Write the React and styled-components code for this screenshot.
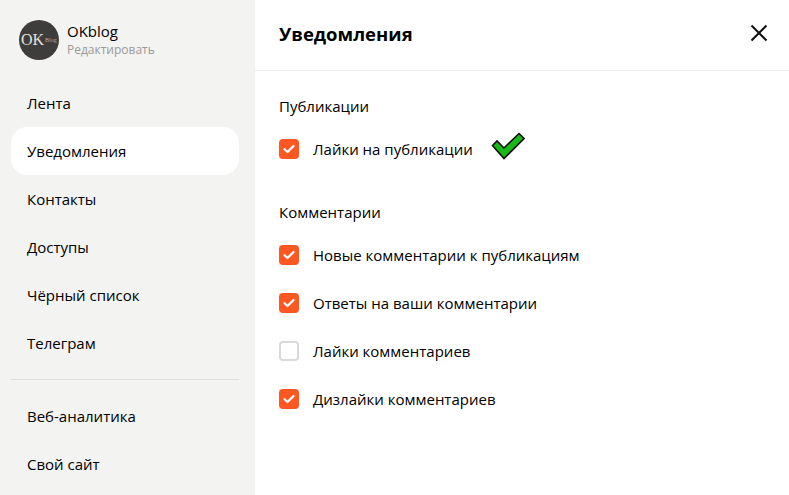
import styled, { createGlobalStyle } from "styled-components";

const GlobalStyle = createGlobalStyle`
  html, body {
    margin: 0;
    height: 100%;
    overflow: hidden;
    background: #fff;
  }
  body {
    font-family: "Open Sans", "Noto Sans", sans-serif;
    color: #000;
  }
`;

const Page = styled.div`
  display: flex;
  width: 789px;
  height: 495px;
  overflow: hidden;
`;

const Sidebar = styled.aside`
  flex: 0 0 255px;
  background: #f3f3f2;
  padding: 0 16px 0 11px;
  box-sizing: border-box;
`;

const Profile = styled.div`
  display: flex;
  align-items: center;
  gap: 8px;
  height: 79px;
  padding-left: 8px;
`;

const Avatar = styled.div`
  width: 40px;
  height: 40px;
  border-radius: 50%;
  background: #3f3d3b;
  color: #e4e0dc;
  display: flex;
  align-items: center;
  font-family: "Liberation Serif", serif;
  font-size: 16px;
  line-height: 1;
  padding: 0 0 0 2px;
  box-sizing: border-box;
  overflow: hidden;
  small {
    font-size: 6px;
    color: #b5aca5;
    margin-left: 1px;
  }
`;

const ProfileText = styled.div`
  display: flex;
  flex-direction: column;
`;

const ProfileName = styled.div`
  font-size: 15px;
  line-height: 19px;
`;

const EditLink = styled.div`
  font-size: 12px;
  line-height: 16px;
  margin-top: 1px;
  color: #999;
`;

const NavItem = styled.div`
  height: 48px;
  display: flex;
  align-items: center;
  padding-left: 16px;
  font-size: 15px;
  border-radius: 16px;
  background: ${p => (p.$active ? "#fff" : "transparent")};
`;

const Divider = styled.div`
  height: 1px;
  background: #dededd;
  margin: 12px 0;
`;

const Main = styled.main`
  flex: 1;
  display: flex;
  flex-direction: column;
`;

const Header = styled.header`
  height: 71px;
  box-sizing: border-box;
  display: flex;
  align-items: center;
  justify-content: space-between;
  padding: 0 20px 4px 24px;
  border-bottom: 1px solid #ececec;
`;

const Title = styled.h1`
  margin: 0;
  font-size: 18.5px;
  font-weight: 700;
`;

const CloseIcon = styled.svg`
  width: 20px;
  height: 20px;
  display: block;
`;

const Content = styled.div`
  padding: 23px 24px 0;
`;

const Group = styled.section`
  margin-bottom: 27px;
`;

const GroupTitle = styled.div`
  font-size: 15px;
  line-height: 24px;
  height: 24px;
  margin-bottom: 7px;
`;

const Row = styled.label`
  height: 48px;
  display: flex;
  align-items: center;
  font-size: 15px;
`;

const Box = styled.span`
  flex: 0 0 20px;
  width: 20px;
  height: 20px;
  border-radius: 4px;
  box-sizing: border-box;
  margin-right: 14px;
  display: flex;
  align-items: center;
  justify-content: center;
  background: ${p => (p.$checked ? "#ff5722" : "#fff")};
  border: ${p => (p.$checked ? "none" : "2px solid #d9d9d9")};
`;

const GreenTick = styled.svg`
  width: 34px;
  height: 28px;
  margin-left: 18px;
  margin-top: -6px;
  display: block;
`;

const Check = ({ label, checked, children }) => (
  <Row>
    <Box $checked={checked}>
      {checked && (
        <svg width="12" height="10" viewBox="0 0 12 10" fill="none">
          <path d="M1.5 5.2 4.5 8l6-6" stroke="#fff" strokeWidth="2.2" strokeLinecap="round" strokeLinejoin="round" />
        </svg>
      )}
    </Box>
    {label}
    {children}
  </Row>
);

const topNav = ["Лента", "Уведомления", "Контакты", "Доступы", "Чёрный список", "Телеграм"];
const bottomNav = ["Веб-аналитика", "Свой сайт"];

export default function App() {
  return (
    <Page>
      <GlobalStyle />
      <Sidebar>
        <Profile>
          <Avatar>OK<small>Blog</small></Avatar>
          <ProfileText>
            <ProfileName>OKblog</ProfileName>
            <EditLink>Редактировать</EditLink>
          </ProfileText>
        </Profile>
        {topNav.map(item => (
          <NavItem key={item} $active={item === "Уведомления"}>{item}</NavItem>
        ))}
        <Divider />
        {bottomNav.map(item => <NavItem key={item}>{item}</NavItem>)}
      </Sidebar>
      <Main>
        <Header>
          <Title>Уведомления</Title>
          <CloseIcon viewBox="0 0 20 20" fill="none">
            <path d="M2.5 2.5 17.5 17.5M17.5 2.5 2.5 17.5" stroke="#111" strokeWidth="2" />
          </CloseIcon>
        </Header>
        <Content>
          <Group>
            <GroupTitle>Публикации</GroupTitle>
            <Check label="Лайки на публикации" checked>
              <GreenTick viewBox="0 0 34 28">
                <path d="M1.5 13.5 6 9l7 7L28 1.5l5 5L13 26.5z" fill="#16b916" stroke="#111" strokeWidth="1.6" strokeLinejoin="miter" />
              </GreenTick>
            </Check>
          </Group>
          <Group>
            <GroupTitle>Комментарии</GroupTitle>
            <Check label="Новые комментарии к публикациям" checked />
            <Check label="Ответы на ваши комментарии" checked />
            <Check label="Лайки комментариев" />
            <Check label="Дизлайки комментариев" checked />
          </Group>
        </Content>
      </Main>
    </Page>
  );
}
